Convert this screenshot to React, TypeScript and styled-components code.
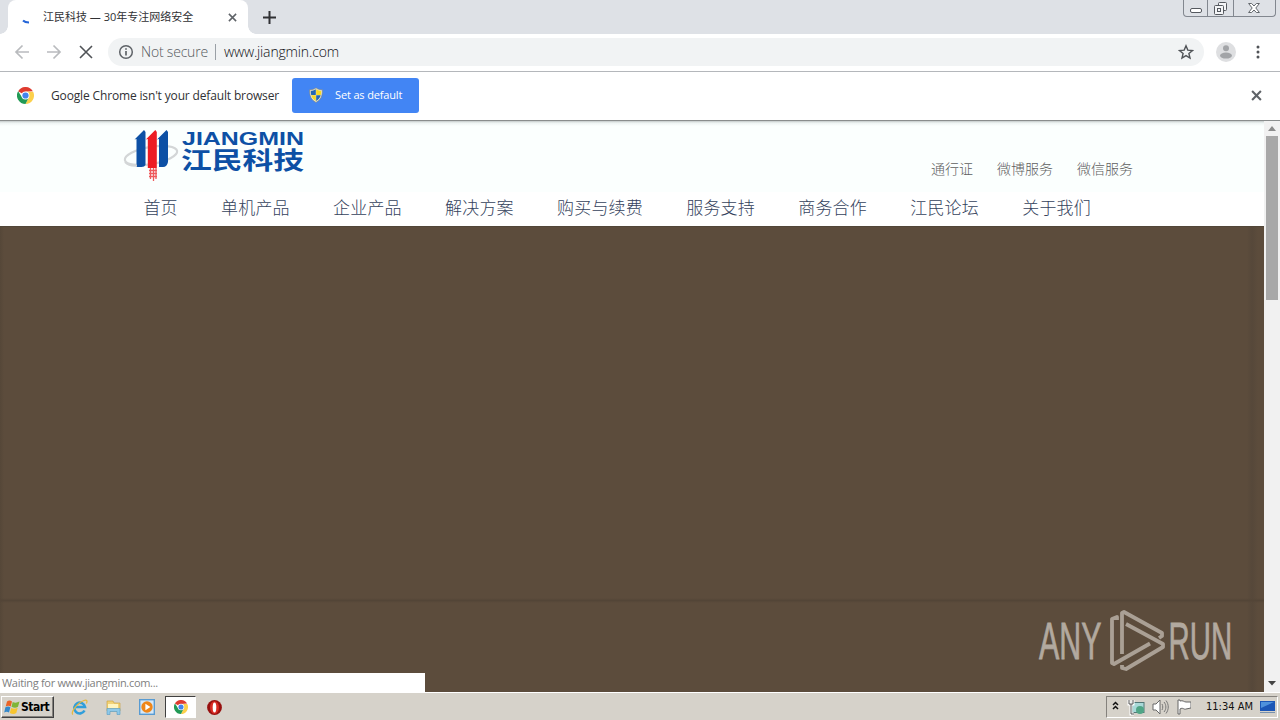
import React from 'react';
import styled, { createGlobalStyle } from 'styled-components';

const GlobalStyle = createGlobalStyle`
    * {
        box-sizing: border-box;
    }

    body {
        margin: 0;
        overflow: hidden;
        font-family: 'Open Sans', 'Noto Sans CJK SC', sans-serif;
    }

    svg {
        display: block;
        flex: none;
    }
`;

const Screen = styled.div`
    position: relative;
    display: flex;
    flex-direction: column;
    width: 1280px;
    height: 720px;
    overflow: hidden;
    background: #fff;
`;

const Label = styled.span<{ $size: number; $color: string; $spacing?: number }>`
    font-size: ${(p) => p.$size}px;
    color: ${(p) => p.$color};
    letter-spacing: ${(p) => p.$spacing ?? 0}px;
    line-height: 16px;
    white-space: nowrap;
`;

const TabStrip = styled.div`
    display: flex;
    justify-content: space-between;
    height: 34px;
    padding-left: 8px;
    background: #dee1e6;
`;

const TabGroup = styled.div`
    display: flex;
    align-items: center;
    gap: 15px;
    height: 34px;
`;

const Tab = styled.div`
    position: relative;
    display: flex;
    align-items: center;
    width: 240px;
    height: 34px;
    padding: 0 11px 0 12px;
    border-radius: 8px 8px 0 0;
    background: #fff;

    &::before,
    &::after {
        content: '';
        position: absolute;
        bottom: 0;
        width: 8px;
        height: 8px;
    }

    &::before {
        left: -8px;
        background: radial-gradient(circle at 0 0, #dee1e6 7.5px, #fff 8px);
    }

    &::after {
        right: -8px;
        background: radial-gradient(circle at 100% 0, #dee1e6 7.5px, #fff 8px);
    }
`;

const TabTitle = styled(Label)`
    flex: 1;
    margin-left: 7px;
`;

const WindowButtons = styled.div`
    display: flex;
    width: 93px;
    height: 17px;
    margin-right: 4px;
    border: 1px solid #82878f;
    border-top: none;
    border-radius: 0 0 4px 4px;
`;

const WindowButton = styled.div<{ $width: number }>`
    display: flex;
    align-items: center;
    justify-content: center;
    width: ${(p) => p.$width}px;

    & + & {
        border-left: 1px solid #82878f;
    }
`;

const Toolbar = styled.div`
    display: flex;
    align-items: center;
    height: 38px;
    padding: 0 14px 1px;
    border-bottom: 1px solid #b4b7bb;
`;

const NavButtons = styled.div`
    display: flex;
    gap: 16px;
`;

const AddressBar = styled.div`
    display: flex;
    align-items: center;
    width: 1096px;
    height: 28px;
    margin-left: 14px;
    padding: 0 10px;
    border-radius: 14px;
    background: #f1f3f4;
    font-weight: 300;
`;

const SecurityText = styled(Label)`
    width: 67px;
    margin-left: 7px;
`;

const Divider = styled.div`
    width: 1px;
    height: 16px;
    margin: 0 8px 0 7px;
    background: #9aa0a6;
`;

const Url = styled(Label)`
    flex: 1;
`;

const ToolbarEnd = styled.div`
    display: flex;
    align-items: center;
    gap: 14px;
    margin-left: 12px;
`;

const InfoBar = styled.div`
    display: flex;
    align-items: center;
    height: 49px;
    padding: 0 18px 1px 17px;
    border-bottom: 1px solid #8a8d8d;
`;

const InfoText = styled(Label)`
    width: 229px;
    margin: 0 12px 0 17px;
`;

const DefaultButton = styled.button`
    display: flex;
    align-items: center;
    gap: 11px;
    width: 127px;
    height: 35px;
    margin-right: auto;
    padding: 0 0 2px 16px;
    border: none;
    border-radius: 3px;
    background: #4285f4;
    font-family: inherit;
`;

const Viewport = styled.div`
    display: flex;
    height: 571px;
`;

const Page = styled.div`
    display: flex;
    flex-direction: column;
    width: 1264px;
`;

const SiteHeader = styled.header`
    display: flex;
    justify-content: space-between;
    height: 71px;
    padding: 5px 131px 0 122px;
    background: linear-gradient(#c3c9c9, #eef4f3 2px, #fbfffe 5px);
`;

const QuickLinks = styled.div`
    display: flex;
    gap: 24px;
    margin-top: 34px;
    font-family: 'Noto Sans CJK SC', sans-serif;
    font-weight: 300;
`;

const SiteNav = styled.nav`
    display: flex;
    gap: 43.4px;
    height: 34px;
    padding: 7px 0 0 143.4px;
    font-family: 'Noto Sans CJK SC', sans-serif;
    font-weight: 300;
`;

const Hero = styled.div`
    flex: 1;
    padding-top: 371px;
    border-top: 1px solid #514638;
    background: linear-gradient(90deg, #554738, #5c4c3c 4px, #5c4c3c 1247px, #56483a 1252px, #5c4c3c 1258px);
`;

const HeroSeam = styled.div`
    height: 5px;
    background: linear-gradient(transparent, #534537, transparent);
`;

const Scrollbar = styled.div`
    display: flex;
    flex-direction: column;
    align-items: center;
    width: 16px;
    padding: 5px 0 6px;
    background: #f1f1f1;
`;

const ScrollThumb = styled.div`
    width: 12px;
    height: 164px;
    margin: 5px 0 auto;
    background: #a8a8a8;
`;

const StatusBubble = styled.div`
    position: absolute;
    left: 0;
    bottom: 28px;
    display: flex;
    align-items: center;
    width: 425px;
    height: 19px;
    padding-left: 2px;
    background: #fff;
`;

const Watermark = styled.svg`
    position: absolute;
    left: 1036px;
    top: 608px;
`;

const Taskbar = styled.div`
    display: flex;
    align-items: center;
    height: 28px;
    padding: 1px 2px 0 1px;
    border-top: 1px solid #fff;
    background: #d6d2ca;
`;

const StartButton = styled.div`
    display: flex;
    align-items: center;
    gap: 1px;
    width: 53px;
    height: 22px;
    padding-left: 2px;
    border: 1px solid;
    border-color: #fff #404040 #404040 #fff;
    box-shadow: inset -1px -1px #85827d;
    font: bold 12px 'DejaVu Sans Condensed', 'DejaVu Sans', sans-serif;
    letter-spacing: -0.5px;
`;

const QuickLaunch = styled.div`
    display: flex;
    align-items: center;
    gap: 17px;
    margin-left: 17px;
`;

const ActiveTask = styled.div`
    display: flex;
    align-items: center;
    justify-content: center;
    width: 31px;
    height: 22px;
    margin: 0 11px 0 10px;
    border: 1px solid;
    border-color: #404040 #fff #fff #404040;
    background: #fff;
`;

const Tray = styled.div`
    display: flex;
    align-items: center;
    width: 172px;
    height: 22px;
    margin-left: auto;
    padding-left: 5px;
    border: 1px solid;
    border-color: #85827d #fff #fff #85827d;
`;

const Clock = styled(Label)`
    width: 49px;
    margin: 0 4px 0 15px;
    font-family: 'DejaVu Sans Condensed', sans-serif;
`;

const CloseIcon = ({ size, color, width = 2 }: { size: number; color: string; width?: number }) => (
    <svg width={size} height={size} viewBox="0 0 10 10" fill="none" stroke={color} strokeWidth={width}>
        <path d="M1 1 9 9M9 1 1 9" />
    </svg>
);

const ArrowIcon = ({ back = false }: { back?: boolean }) => (
    <svg width="16" height="16" viewBox="0 0 16 16" fill="none" stroke="#b9bbbe" strokeWidth="1.7">
        <path d={back ? 'M15 8H2M8.5 1.5 2 8l6.5 6.5' : 'M1 8h13M7.5 1.5 14 8l-6.5 6.5'} />
    </svg>
);

const ChromeIcon = ({ size }: { size: number }) => (
    <svg width={size} height={size} viewBox="0 0 18 18">
        <path d="M9 9 1.2 4.5A9 9 0 0 1 16.8 4.5L9 5Z" fill="#df3b2f" />
        <path d="M9 5h8.1A9 9 0 0 1 9 18l3.5-7Z" fill="#fcd04b" />
        <path d="M1.2 4.5A9 9 0 0 0 9 18l3.5-7L9 9 5.5 11Z" fill="#229a56" />
        <circle cx="9" cy="9" r="4.2" fill="#fff" />
        <circle cx="9" cy="9" r="3.3" fill="#4384ed" />
    </svg>
);

const ShieldIcon = () => (
    <svg width="16" height="16" viewBox="0 0 16 16">
        <path d="M8 .8C6 2.4 4 2.8 1.6 2.8 1.5 9 3 12.8 8 15.4 13 12.8 14.5 9 14.4 2.8 12 2.8 10 2.4 8 .8Z" fill="#e6e4cf" stroke="#79807e" strokeWidth=".6" />
        <path d="M7.8 2.3C6 3.5 4.5 3.8 2.8 3.9c0 1.6.1 2.9.4 4.1h4.6Z" fill="#2467b5" />
        <path d="M8.2 2.3c1.8 1.2 3.3 1.5 5 1.6 0 1.6-.1 2.9-.4 4.1H8.2Z" fill="#f6d925" />
        <path d="M3.3 8.3c.7 2.6 2.1 4.3 4.5 5.7V8.3Z" fill="#f6d925" />
        <path d="M12.7 8.3c-.7 2.6-2.1 4.3-4.5 5.7V8.3Z" fill="#2467b5" />
    </svg>
);

const JiangminLogo = () => (
    <svg width="186" height="58" viewBox="0 0 186 58">
        <ellipse cx="29" cy="29.5" rx="26.5" ry="8.5" transform="rotate(-10 29 29.5)" fill="none" stroke="#d3d6d7" strokeWidth="2.2" />
        <path d="m12.5 13.500 9.500-9.500 1.500 2v33q-1 2-4 2H14.500V13Z" fill="#0d50a5" />
        <path d="m23.800 13.500 9.500-9.500 1.500 2v36h-9V13Z" fill="#ed1c24" />
        <path d="m35 13.500 9.500-9.500 1.500 2v30q-1 5-5 5h-4V13Z" fill="#0d50a5" />
        <path d="M28.500 42v11M31.500 42v13M34 42v11M27 44.500h8M27 47.500h8M27 50.500h8" fill="none" stroke="#ee5a5c" strokeWidth="1.3" />
        <path d="M3 36c3 3 8 4 12 3.500" fill="none" stroke="#d3d6d7" strokeWidth="2" />
        <text x="60" y="19" textLength="122" lengthAdjust="spacingAndGlyphs" fontFamily="Liberation Sans" fontWeight="700" fontSize="18" fill="#0d50a5">
            JIANGMIN
        </text>
        <text x="59" y="42.5" textLength="123" lengthAdjust="spacingAndGlyphs" fontFamily="Noto Sans CJK SC" fontWeight="700" fontSize="24" fill="#0d50a5">
            江民科技
        </text>
    </svg>
);

const ExplorerIcon = () => (
    <svg width="17" height="17" viewBox="0 0 17 17" fill="none">
        <path d="M13.5 11.5A5.4 5.4 0 1 1 14 8H5" stroke="#2f9edb" strokeWidth="2.6" />
        <path d="M2 15.5C-1 14 6 4 13 1.5c3-1 3.6.5 2.4 3" stroke="#e6b93c" strokeWidth="1.2" />
    </svg>
);

const FolderIcon = () => (
    <svg width="17" height="17" viewBox="0 0 17 17">
        <path d="M2 2h6l1 2h6v8H2Z" fill="#f1d277" stroke="#c99d35" strokeWidth=".6" />
        <path d="M3 5h10v4H3Z" fill="#fff4be" />
        <path d="M2 9.5h13v6h-3v-3H5v3H2Z" fill="#8ec8e8" stroke="#569ac4" strokeWidth=".6" />
    </svg>
);

const MediaIcon = () => (
    <svg width="16" height="16" viewBox="0 0 16 16">
        <rect x=".7" y=".7" width="14.6" height="14.6" fill="#d5e8f8" stroke="#589bd2" strokeWidth="1.4" />
        <circle cx="8" cy="8" r="5.7" fill="#ef8618" />
        <path d="m6.4 4.8 5 3.2-5 3.2Z" fill="#fff" />
    </svg>
);

const OperaIcon = () => (
    <svg width="15" height="15" viewBox="0 0 15 15">
        <circle cx="7.5" cy="7.5" r="7.4" fill="#97100f" />
        <ellipse cx="7.5" cy="7.5" rx="4.5" ry="6.3" fill="#d92b23" />
        <ellipse cx="7.5" cy="7.5" rx="1.8" ry="5" fill="#fff" />
    </svg>
);

const WindowsFlag = () => (
    <svg width="16" height="16" viewBox="0 0 16 16">
        <path d="M3 2.5c2-1.5 3.5-1 5 0l-1.3 5c-1.5-1-3-1.3-5 0Z" fill="#ea6326" />
        <path d="M8.7 3c2 1 4 1 6.8-.4L14 7.8c-2 1.3-4 1.2-6.5 0Z" fill="#7fb538" />
        <path d="M1.4 8.3c2-1.2 3.6-1 5 0L5 13.5c-1.5-1-3-1.2-4.8 0Z" fill="#3488ca" />
        <path d="M7.2 8.9c2 1.1 4 1 6.5-.2L12.3 14c-2 1.3-4 1.2-6.5 0Z" fill="#f7c52f" />
    </svg>
);

const TrayIcons = () => (
    <svg width="79" height="18" viewBox="0 0 79 18" fill="none">
        <path d="m1 7 2.5-2.5L6 7M1 11l2.5-2.5L6 11" stroke="#111" strokeWidth="1.5" />
        <rect x="20" y="4.5" width="12" height="10" fill="#a9d9d8" stroke="#527777" />
        <path d="M17 2v4h4V2M19 6v10h3" stroke="#fff" strokeWidth="3" />
        <path d="M17 2v4h4V2M19 6v10h3" stroke="#555" />
        <circle cx="28" cy="12" r="4" fill="#50a586" />
        <path d="M41 6h3l4-4v14l-4-4h-3Z" fill="#fff" stroke="#686868" />
        <path d="M50 6c1 2 1 4 0 6M52 4c2.5 3 2.5 7 0 10M54 2.5c3 4 3 9 0 13" stroke="#777" />
        <path d="M66 2v14h2v-5c3-2 4 1 6 0l5-1V4h-5c-2 0-3-2-6-1V2Z" fill="#fff" stroke="#666" />
    </svg>
);

const DesktopIcon = () => (
    <svg width="17" height="16" viewBox="0 0 17 16">
        <path d="M1 2h15v10H1Z" fill="#1c56b6" />
        <path d="M2 3h13L2 9Z" fill="#4f91dc" />
        <path d="M1 13h15v1H1Z" fill="#7891ae" />
    </svg>
);

const quickLinks = ['通行证', '微博服务', '微信服务'];

const navItems = [
    '首页',
    '单机产品',
    '企业产品',
    '解决方案',
    '购买与续费',
    '服务支持',
    '商务合作',
    '江民论坛',
    '关于我们',
];

const App = (): JSX.Element => (
    <Screen>
        <GlobalStyle />
        <TabStrip>
            <TabGroup>
                <Tab>
                    <svg width="16" height="16" viewBox="0 0 16 16" fill="none">
                        <path d="M3 11.5q2 2 6 2" stroke="#2465d8" strokeWidth="2" />
                    </svg>
                    <TabTitle $size={11} $color="#303134">
                        江民科技 — 30年专注网络安全
                    </TabTitle>
                    <CloseIcon size={9} color="#5f6368" width={1.7} />
                </Tab>
                <svg width="13" height="13" viewBox="0 0 13 13" stroke="#303134" strokeWidth="2">
                    <path d="M6.5 0v13M0 6.5h13" />
                </svg>
            </TabGroup>
            <WindowButtons>
                <WindowButton $width={24}>
                    <svg width="12" height="15" viewBox="0 0 12 15">
                        <rect x=".5" y="7.5" width="11" height="4" rx="1.5" fill="#fff" stroke="#55595f" />
                    </svg>
                </WindowButton>
                <WindowButton $width={26}>
                    <svg width="13" height="13" viewBox="0 0 13 13" fill="#f4f5f7" stroke="#55595f">
                        <rect x="4.5" y=".5" width="8" height="8" rx="1" />
                        <rect x=".5" y="3.5" width="9" height="9" rx="1" />
                        <rect x="3.5" y="6.5" width="3" height="3" />
                    </svg>
                </WindowButton>
                <WindowButton $width={43}>
                    <svg width="12" height="10" viewBox="0 0 12 10" fill="#fff" stroke="#55595f" strokeWidth=".9">
                        <path d="M.6.5h3L6 3 8.4.5h3L7.8 5l3.6 4.5h-3L6 7 3.6 9.5h-3L4.2 5Z" />
                    </svg>
                </WindowButton>
            </WindowButtons>
        </TabStrip>

        <Toolbar>
            <NavButtons>
                <ArrowIcon back />
                <ArrowIcon />
                <svg width="16" height="16" viewBox="0 0 16 16" stroke="#505357" strokeWidth="1.6">
                    <path d="m2 2 12 12M14 2 2 14" />
                </svg>
            </NavButtons>
            <AddressBar>
                <svg width="16" height="16" viewBox="0 0 16 16" fill="none" stroke="#5f6368" strokeWidth="1.5">
                    <circle cx="8" cy="8" r="6.3" />
                    <path d="M8 7v4.5M8 4.3v1.5" strokeWidth="1.7" />
                </svg>
                <SecurityText $size={14} $color="#55595d" $spacing={-0.2}>
                    Not secure
                </SecurityText>
                <Divider />
                <Url $size={14} $color="#101114" $spacing={-0.15}>
                    www.jiangmin.com
                </Url>
                <svg width="16" height="16" viewBox="0 0 16 16" fill="none" stroke="#505357" strokeWidth="1.4">
                    <path d="m8 1.8 1.8 4.3 4.7.4-3.6 3 1.1 4.6L8 11.6 4 14.1l1.1-4.6-3.6-3 4.7-.4Z" />
                </svg>
            </AddressBar>
            <ToolbarEnd>
                <svg width="20" height="20" viewBox="0 0 20 20">
                    <circle cx="10" cy="10" r="10" fill="#dedfe1" />
                    <circle cx="10" cy="6.3" r="3" fill="#a2a4a7" />
                    <ellipse cx="10" cy="13.6" rx="6" ry="3" fill="#a2a4a7" />
                </svg>
                <svg width="16" height="16" viewBox="0 0 16 16" fill="#505357">
                    <circle cx="8" cy="3" r="1.5" />
                    <circle cx="8" cy="8" r="1.5" />
                    <circle cx="8" cy="13" r="1.5" />
                </svg>
            </ToolbarEnd>
        </Toolbar>

        <InfoBar>
            <ChromeIcon size={17} />
            <InfoText $size={12} $color="#303134" $spacing={-0.15}>
                Google Chrome isn't your default browser
            </InfoText>
            <DefaultButton>
                <ShieldIcon />
                <Label $size={11} $color="#fff" $spacing={-0.15}>
                    Set as default
                </Label>
            </DefaultButton>
            <CloseIcon size={11} color="#5f6368" width={1.9} />
        </InfoBar>

        <Viewport>
            <Page>
                <SiteHeader>
                    <JiangminLogo />
                    <QuickLinks>
                        {quickLinks.map((link) => (
                            <Label key={link} $size={14} $color="#5e605e">
                                {link}
                            </Label>
                        ))}
                    </QuickLinks>
                </SiteHeader>
                <SiteNav>
                    {navItems.map((item) => (
                        <Label key={item} $size={17} $color="#34425c" $spacing={0.15}>
                            {item}
                        </Label>
                    ))}
                </SiteNav>
                <Hero>
                    <HeroSeam />
                </Hero>
            </Page>
            <Scrollbar>
                <svg width="8" height="5" viewBox="0 0 8 5">
                    <path d="M0 5 4 0l4 5Z" fill="#8b8b8b" />
                </svg>
                <ScrollThumb />
                <svg width="8" height="5" viewBox="0 0 8 5">
                    <path d="m0 0 4 4.5L8 0Z" fill="#444" />
                </svg>
            </Scrollbar>
        </Viewport>

        <StatusBubble>
            <Label $size={11} $color="#808080" $spacing={-0.3}>
                Waiting for www.jiangmin.com...
            </Label>
        </StatusBubble>

        <Watermark width="204" height="68" viewBox="0 0 204 68" fill="none">
            <g fill="#b2a99f" stroke="#b2a99f" strokeWidth=".8" fontFamily="Liberation Sans Narrow, Liberation Sans" fontSize="52">
                <text transform="translate(3 51) scale(.6 1)" textLength="104" lengthAdjust="spacingAndGlyphs">
                    ANY
                </text>
                <text transform="translate(132.5 51) scale(.6 1)" textLength="106" lengthAdjust="spacingAndGlyphs">
                    RUN
                </text>
            </g>
            <g stroke="#aaa095" strokeWidth="3.8" strokeLinejoin="round">
                <path d="M81 12V9l-5 2v44l2 1 36-20.5" />
                <path d="M86 46V5l2-1 38 21v3l-3 2" />
                <path d="m90 16 37 20v3L90 61l-4-1v-3" />
            </g>
        </Watermark>

        <Taskbar>
            <StartButton>
                <WindowsFlag />
                Start
            </StartButton>
            <QuickLaunch>
                <ExplorerIcon />
                <FolderIcon />
                <MediaIcon />
            </QuickLaunch>
            <ActiveTask>
                <ChromeIcon size={14} />
            </ActiveTask>
            <OperaIcon />
            <Tray>
                <TrayIcons />
                <Clock $size={11} $color="#111">
                    11:34 AM
                </Clock>
                <DesktopIcon />
            </Tray>
        </Taskbar>
    </Screen>
);

export default App;
